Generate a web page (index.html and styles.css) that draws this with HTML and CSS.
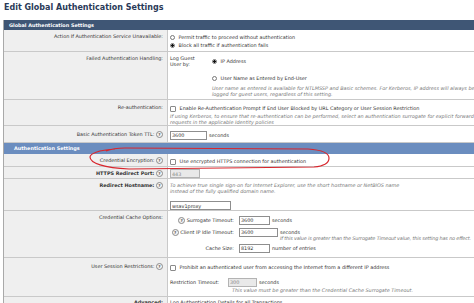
FILE: index.html
```html
<!DOCTYPE html>
<html lang="en">
<head>
    <meta charset="UTF-8">
    <title>Edit Global Authentication Settings</title>
    <link rel="stylesheet" href="styles.css">
</head>
<body>
    <h1 class="page-title">Edit Global Authentication Settings</h1>

    <div class="panel">
        <div class="section section-dark">Global Authentication Settings</div>

        <div class="row row-action">
            <div class="label">Action If Authentication Service Unavailable:</div>
            <div class="value">
                <div class="opt"><input type="radio" name="act"> Permit traffic to proceed without authentication</div>
                <div class="opt"><input type="radio" name="act" checked> Block all traffic if authentication fails</div>
            </div>
        </div>

        <div class="row row-failed">
            <div class="label">Failed Authentication Handling:</div>
            <div class="value guest">
                <div class="guest-label">Log Guest<br>User by:</div>
                <div class="guest-opts">
                    <div class="opt"><input type="radio" name="guest" checked> IP Address</div>
                    <div class="opt opt-gap"><input type="radio" name="guest"> User Name as Entered by End-User</div>
                    <div class="hint hint-guest">User name as entered is available for NTLMSSP and Basic schemes. For Kerberos, IP address will always be<br>logged for guest users, regardless of this setting.</div>
                </div>
            </div>
        </div>

        <div class="row row-reauth">
            <div class="label">Re-authentication:</div>
            <div class="value">
                <div class="opt"><input type="checkbox"> Enable Re-Authentication Prompt If End User Blocked by URL Category or User Session Restriction</div>
                <div class="hint hint-reauth">If using Kerberos, to ensure that re-authentication can be performed, select an authentication surrogate for explicit forward<br>requests in the applicable Identity policies</div>
            </div>
        </div>

        <div class="row row-ttl">
            <div class="label">Basic Authentication Token TTL: <span class="help">?</span></div>
            <div class="value">
                <div class="inline-field"><input class="field field-ttl" type="text" value="3600"> seconds</div>
            </div>
        </div>

        <div class="section section-light">Authentication Settings</div>

        <div class="row row-enc">
            <div class="label">Credential Encryption: <span class="help">?</span></div>
            <div class="value"><div class="opt"><input type="checkbox"> Use encrypted HTTPS connection for authentication</div></div>
        </div>

        <div class="row row-port">
            <div class="label bold">HTTPS Redirect Port: <span class="help">?</span></div>
            <div class="value"><input class="field field-port" type="text" value="443" disabled></div>
        </div>

        <div class="row row-host">
            <div class="label bold">Redirect Hostname: <span class="help">?</span></div>
            <div class="value">
                <div class="hint">To achieve true single sign-on for Internet Explorer, use the short hostname or NetBIOS name<br>instead of the fully qualified domain name.</div>
                <input class="field field-host" type="text" value="wsav1proxy">
            </div>
        </div>

        <div class="row row-cache">
            <div class="label">Credential Cache Options:</div>
            <div class="value cache">
                <div class="cache-label"><span class="help">?</span> Surrogate Timeout:</div>
                <div class="inline-field"><input class="field field-short" type="text" value="3600"> seconds</div>
                <div class="cache-label"><span class="help">?</span> Client IP Idle Timeout:</div>
                <div class="inline-field">
                    <input class="field field-idle" type="text" value="3600">
                    <div class="unit">seconds
                        <div class="hint hint-idle">If this value is greater than the Surrogate Timeout value, this setting has no effect.</div>
                    </div>
                </div>
                <div class="cache-label">Cache Size:</div>
                <div class="inline-field"><input class="field field-short" type="text" value="8192"> number of entries</div>
            </div>
        </div>

        <div class="row row-session">
            <div class="label">User Session Restrictions: <span class="help">?</span></div>
            <div class="value">
                <div class="opt"><input type="checkbox"> Prohibit an authenticated user from accessing the Internet from a different IP address</div>
                <div class="restrict">
                    <div class="restrict-label">Restriction Timeout:</div>
                    <div>
                        <div class="inline-field"><input class="field field-restrict" type="text" value="300" disabled> seconds</div>
                        <div class="hint hint-restrict">This value must be greater than the Credential Cache Surrogate Timeout.</div>
                    </div>
                </div>
            </div>
        </div>

        <div class="row row-more">
            <div class="label bold">Advanced:</div>
            <div class="value">Log Authentication Details for all Transactions</div>
        </div>

        <!-- hand drawn mark around the credential encryption row -->
        <svg class="mark" width="244" height="26" viewBox="0 0 244 26">
            <path d="M26 3 C9 4 1 8 1 11 C1 17 15 22 40 23 L225 21 C236 20 240 16 240 12 C240 7 233 4 219 3 L36 2 C29 2 22 3 17 5"
                  fill="none" stroke="#d8262d" stroke-width="1.2"/>
        </svg>
    </div>
</body>
</html>
```

FILE: styles.css
```css
html, body {
    overflow: hidden;
}

body {
    margin: 0;
    padding: 0 0 0 3px;
    font-family: "DejaVu Sans", Verdana, sans-serif;
    font-size: 4.9px;
    color: #333;
    background: #fff;
}

.page-title {
    margin: 0;
    padding: 3px 0 0 1px;
    height: 20px;
    box-sizing: border-box;
    font-size: 8px;
    color: #2a3a58;
}

.panel {
    position: relative;
    width: 600px;
    border-left: 1px solid #a9a9a9;
}

.section {
    box-sizing: border-box;
    padding-left: 5px;
    color: #fff;
    font-weight: bold;
}

.section-dark {
    height: 10px;
    line-height: 10px;
    background: #3f5675;
}

.section-light {
    height: 11px;
    line-height: 11px;
    padding-left: 10px;
    background: #6b8dbf;
}

.row {
    display: grid;
    grid-template-columns: 164px 1fr;
    box-sizing: border-box;
    border-bottom: 1px solid #c9c9c9;
    overflow: hidden;
}

/* row heights follow the original screen */
.row-action { height: 22px; }
.row-failed { height: 48px; }
.row-reauth { height: 26px; }
.row-ttl { height: 17px; }
.row-enc { height: 13px; }
.row-port { height: 12px; }
.row-host { height: 32px; }
.row-cache { height: 47px; }
.row-session { height: 39px; }
.row-more { height: 20px; }

.label {
    box-sizing: border-box;
    padding: 3px 4px 0 0;
    background: #efefef;
    border-right: 1px solid #c9c9c9;
    text-align: right;
    line-height: 6px;
}

.label.bold {
    font-weight: bold;
}

.value {
    padding: 3px 0 0 2px;
    background: #fff;
}

.row-reauth .label { padding-top: 4px; }
.row-ttl .label { padding-top: 5px; }
.row-enc .label { padding-top: 3px; }
.row-port .label { padding-top: 3px; }
.row-host .label { padding-top: 3px; }
.row-session .label { padding-top: 5px; }
.row-more .label { padding-top: 2px; }

.row-reauth .value { padding-top: 4px; }
.row-ttl .value { padding-top: 5px; }
.row-port .value { padding-top: 2px; }
.row-cache .value { padding-top: 5px; }
.row-session .value { padding-top: 5px; }
.row-more .value { padding-top: 2px; line-height: 6px; }

.help {
    display: inline-block;
    width: 5px;
    height: 5px;
    line-height: 5px;
    border: 1px solid #8a8a8a;
    border-radius: 50%;
    background: #f3f3f3;
    font-size: 4px;
    text-align: center;
    font-weight: bold;
    vertical-align: middle;
    color: #555;
}

.opt {
    line-height: 8px;
    white-space: nowrap;
}

.opt input {
    appearance: none;
    margin: 0 2px 0 0;
    width: 5px;
    height: 5px;
    border: 1px solid #777;
    background: #fff;
    vertical-align: middle;
    box-sizing: border-box;
}

.opt input[type="checkbox"] {
    width: 6px;
    height: 6px;
    border-color: #8a8a8a;
    border-radius: 1px;
}

.opt input[type="radio"] {
    border-radius: 50%;
}

.opt input[type="radio"]:checked {
    background: radial-gradient(circle, #111 0 1.2px, #fff 1.5px);
}

.hint {
    font-style: italic;
    color: #777;
    line-height: 6px;
    white-space: nowrap;
}

.hint-guest {
    margin-top: 3px;
}

.hint-reauth {
    margin-top: 1px;
}

.hint-idle {
    letter-spacing: -0.15px;
}

.hint-restrict {
    padding-left: 4px;
}

.inline-field {
    display: flex;
    align-items: flex-start;
    gap: 2px;
    line-height: 9px;
    white-space: nowrap;
}

.unit .hint {
    margin-top: -2px;
}

.field {
    display: block;
    width: 38px;
    height: 9px;
    padding: 0 1px;
    margin: 0;
    border: 1px solid #8e8e8e;
    font: inherit;
    color: #333;
    box-sizing: border-box;
}

.field:disabled {
    background: #e9e9e9;
    border-color: #b3b3b3;
    color: #888;
}

.field-ttl {
    width: 37px;
}

.field-port {
    width: 30px;
}

.field-host {
    width: 61px;
    margin-top: 7px;
}

.field-short {
    width: 31px;
}

.field-idle {
    width: 39px;
}

.field-restrict {
    width: 29px;
}

.guest {
    display: flex;
}

.guest-label {
    width: 42px;
    line-height: 6px;
}

.guest-opts {
    padding-top: 2px;
}

.opt-gap {
    margin-top: 9px;
}

.cache {
    display: grid;
    grid-template-columns: 64px auto;
    column-gap: 5px;
    row-gap: 3px;
    align-content: start;
    align-items: start;
}

.cache-label {
    text-align: right;
    line-height: 9px;
    white-space: nowrap;
}

.restrict {
    display: flex;
    margin-top: 7px;
}

.restrict-label {
    width: 58px;
    line-height: 9px;
}

.mark {
    position: absolute;
    left: 85px;
    top: 126px;
}
```
